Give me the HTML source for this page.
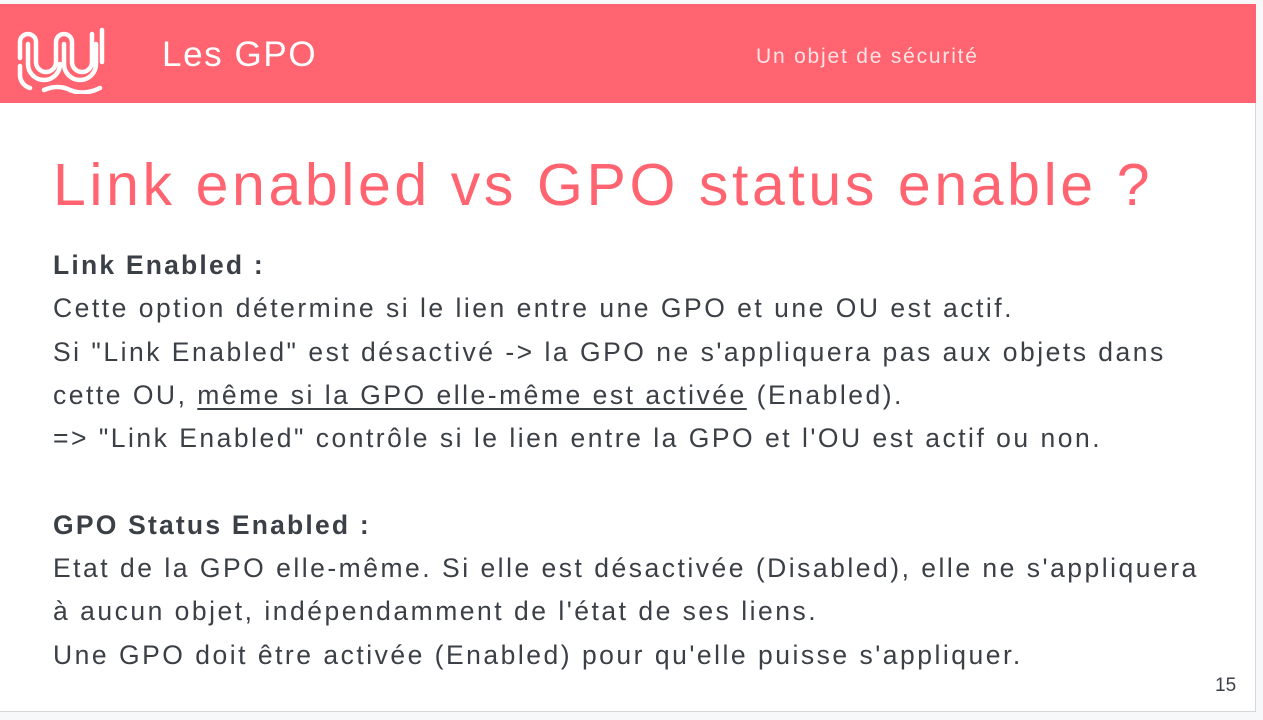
<!DOCTYPE html>
<html><head><meta charset="utf-8"><style>
html,body{margin:0;padding:0;width:1263px;height:720px;background:#f7f8fa;overflow:hidden;font-family:"Liberation Sans",sans-serif}
.slide{position:absolute;left:0;top:4px;width:1255px;height:707px;background:#fff;border-right:1px solid #d4d6da;border-bottom:1px solid #d4d6da}
.hdr{position:absolute;left:0;top:0;width:1256px;height:99px;background:#ff6470}
.t1{position:absolute;left:162px;top:31px;color:#fff;font-size:35px;letter-spacing:1.6px}
.t2{position:absolute;left:756px;top:41px;color:#ffe3e5;font-size:21px;letter-spacing:1.8px}
h1{position:absolute;left:53px;top:147px;margin:0;font-weight:normal;color:#ff6470;font-size:59px;letter-spacing:3.6px;white-space:nowrap}
.body{position:absolute;left:53px;top:240px;color:#3b3f46;font-size:26.5px;line-height:43.3px;white-space:nowrap;letter-spacing:2.5px}
b{font-weight:bold;letter-spacing:2.2px}
u{text-decoration-thickness:2px;text-underline-offset:4px}
.pg{position:absolute;left:1215px;top:671px;font-size:19px;color:#3b3f46}
</style></head><body>
<div class="slide">
<div class="hdr">
<svg style="position:absolute;left:14px;top:18px" width="96" height="72" viewBox="0 0 96 72" fill="none" stroke="#fff" stroke-width="4.5" stroke-linecap="round">
<path d="M6 36 V20 a8 8 0 0 1 16 0 V40 a10 10 0 0 0 20 0 V20 a8 8 0 0 1 16 0 V40 a10 10 0 0 0 20 0 V12"/>
<path d="M6 44 V54 a14 14 0 0 0 10 12"/>
<path d="M14 22 V42 a16 16 0 0 0 32 0"/>
<path d="M50 22 V42 a16 16 0 0 0 32 0 V22"/>
<path d="M30 68 q14 -6 26 0 q14 6 30 -2"/>
<path d="M88 8 V40"/>
</svg>
<div class="t1">Les GPO</div>
<div class="t2">Un objet de sécurité</div>
</div>
<h1>Link enabled vs GPO status enable ?</h1>
<div class="body">
<b>Link Enabled :</b><br>
Cette option détermine si le lien entre une GPO et une OU est actif.<br>
Si "Link Enabled" est désactivé -&gt; la GPO ne s'appliquera pas aux objets dans<br>
cette OU, <u>même si la GPO elle-même est activée</u> (Enabled).<br>
=&gt; "Link Enabled" contrôle si le lien entre la GPO et l'OU est actif ou non.<br>
<br>
<b>GPO Status Enabled :</b><br>
Etat de la GPO elle-même. Si elle est désactivée (Disabled), elle ne s'appliquera<br>
à aucun objet, indépendamment de l'état de ses liens.<br>
Une GPO doit être activée (Enabled) pour qu'elle puisse s'appliquer.
</div>
<div class="pg">15</div>
</div>
</body></html>
